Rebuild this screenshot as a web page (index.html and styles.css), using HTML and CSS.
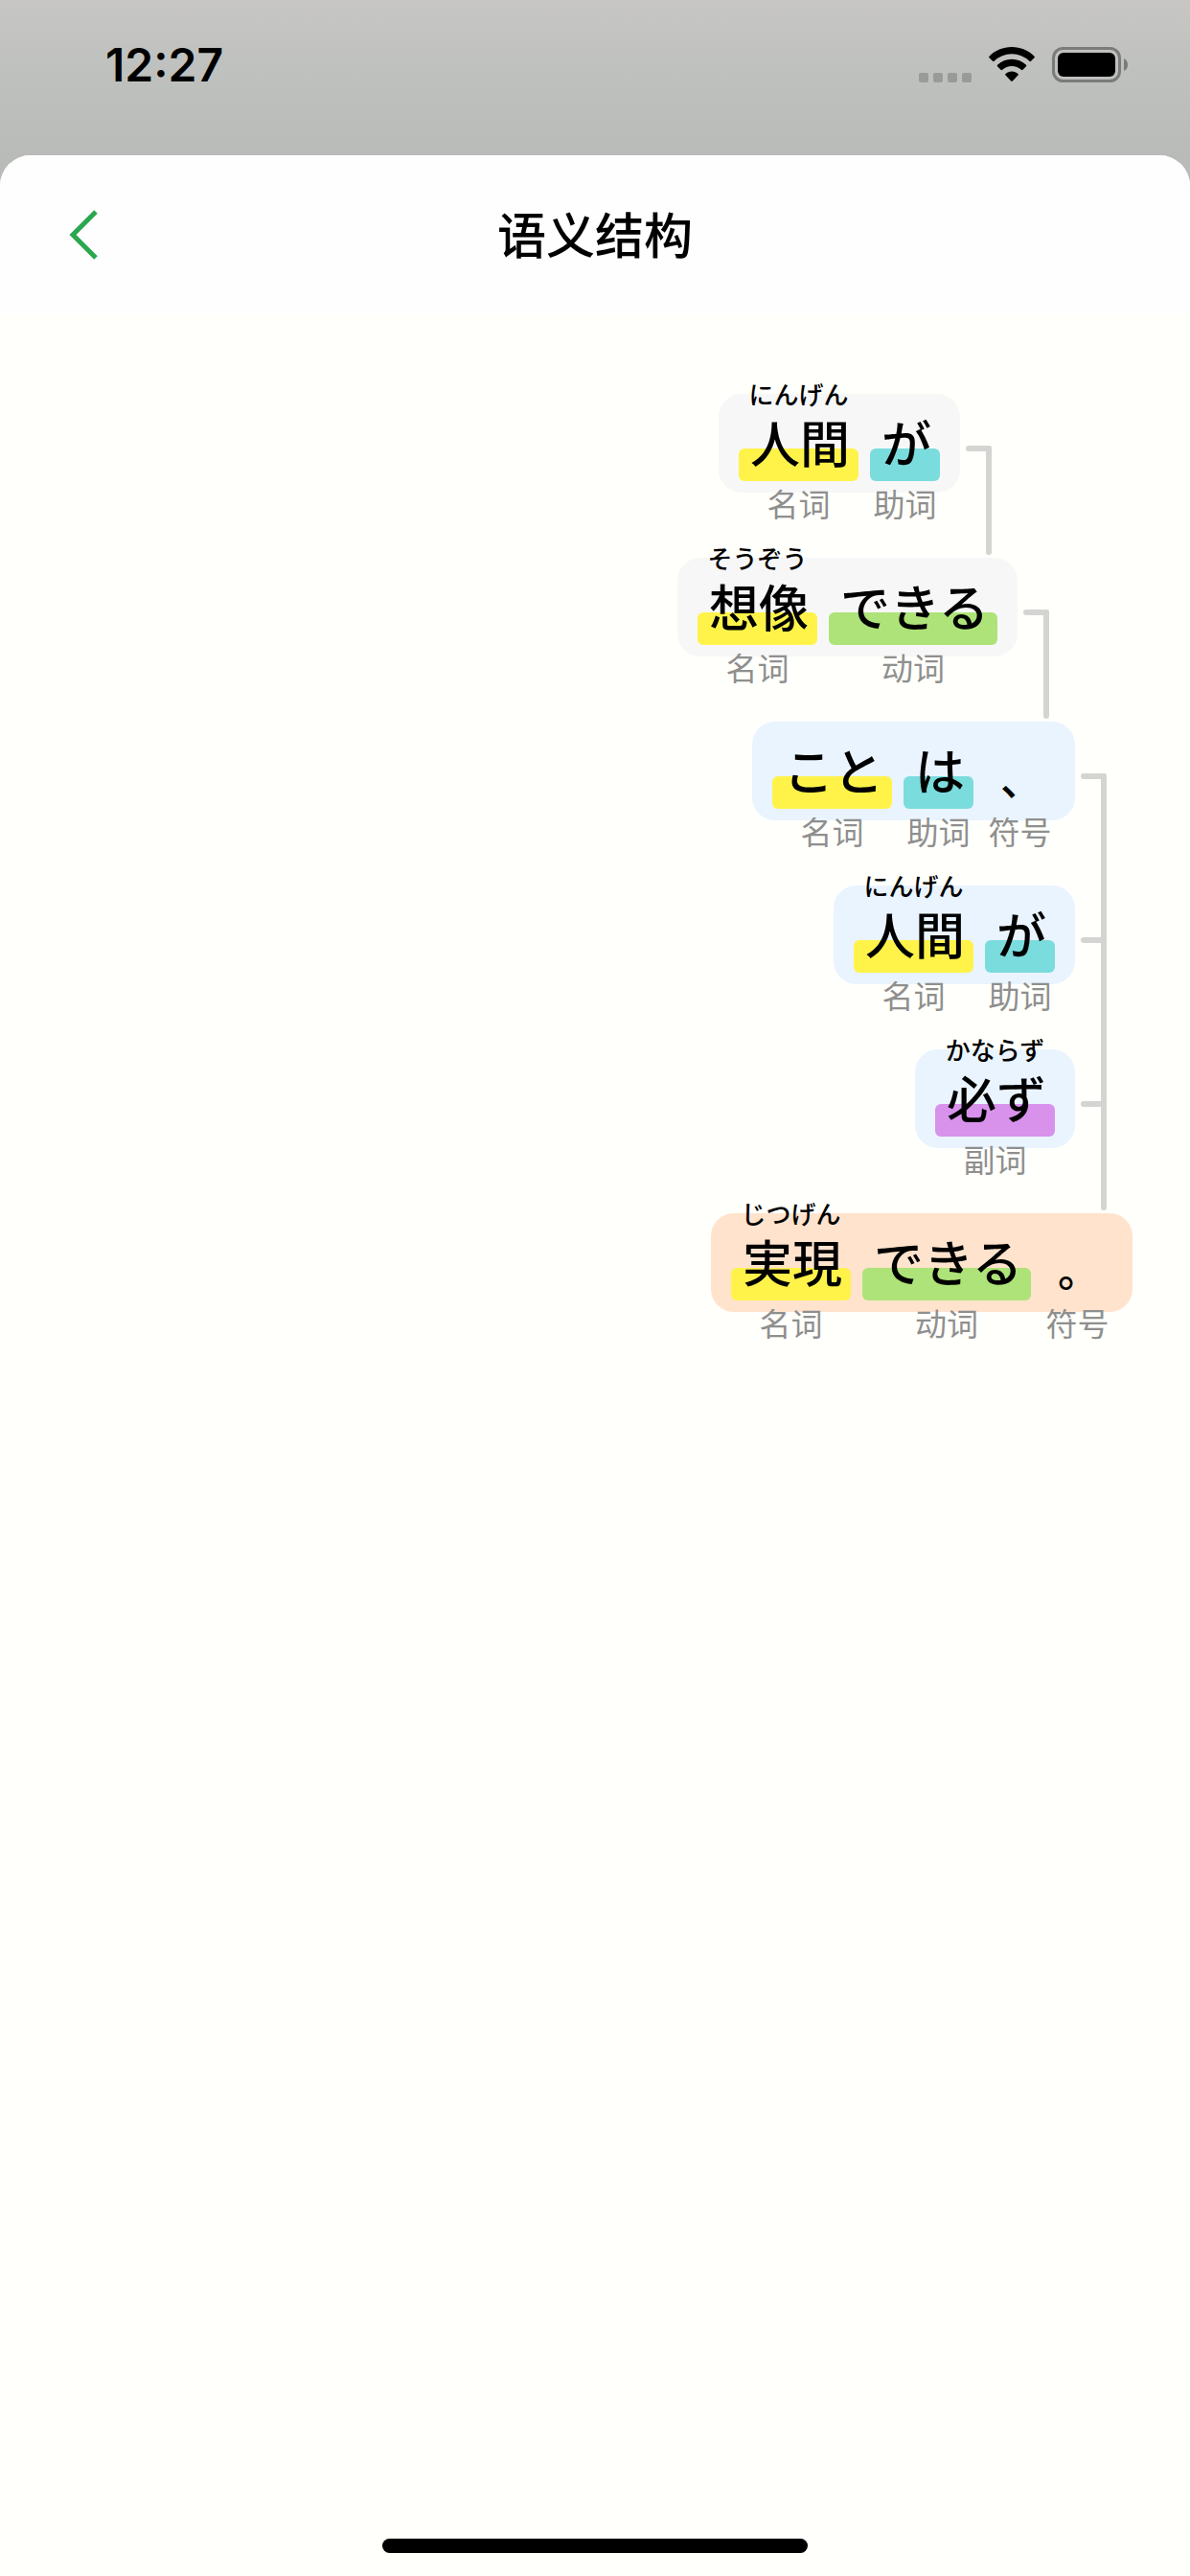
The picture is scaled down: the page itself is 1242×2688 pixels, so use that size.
FILE: index.html
```html
<!DOCTYPE html>
<html lang="zh-CN">
<head>
<meta charset="utf-8">
<meta name="viewport" content="width=device-width, initial-scale=1">
<title>语义结构</title>
<link rel="stylesheet" href="styles.css">
</head>
<body>
<div class="status">
  <time class="status__time">12:27</time>
  <div class="status__icons">
    <svg class="status__cell" width="55" height="10" viewBox="0 0 55 10" aria-hidden="true">
      <rect width="10" height="10" rx="2"/><rect x="15" width="10" height="10" rx="2"/><rect x="30" width="10" height="10" rx="2"/><rect x="45" width="10" height="10" rx="2"/>
    </svg>
    <svg width="48" height="37" viewBox="0 0 48 37" aria-hidden="true">
      <path d="M24 0C33 0 41.500 3.600 47.500 9.700Q48.300 10.500 47.500 11.300L44 14.800Q43.200 15.500 42.400 14.800A26.500 26.500 0 0 0 5.600 14.800Q4.800 15.500 4 14.800L.500 11.300Q-.300 10.500 .500 9.700C6.500 3.600 15 0 24 0Z"/>
      <path d="M24 12.700C29.700 12.700 35 14.900 39 18.700Q39.700 19.500 39 20.300L35.500 23.800Q34.700 24.500 33.900 23.800A14.600 14.600 0 0 0 14.100 23.800Q13.300 24.500 12.500 23.800L9 20.300Q8.300 19.500 9 18.700C13 14.900 18.300 12.700 24 12.700Z"/>
      <path d="M24 25.500C26.500 25.500 28.800 26.400 30.500 27.900Q31.200 28.600 30.500 29.400L24.800 35.500Q24 36.300 23.200 35.500L17.500 29.400Q16.800 28.600 17.500 27.900C19.200 26.400 21.500 25.500 24 25.500Z"/>
    </svg>
    <svg width="80" height="37" viewBox="0 0 80 37" aria-hidden="true">
      <rect x="1.500" y="1.500" width="69" height="34" rx="10" fill="none" stroke="#7a7c7a" stroke-width="3"/>
      <rect x="6" y="6" width="60" height="25" rx="6"/>
      <path d="M75 12Q79 14 79 18.500T75 25Z" fill="#7a7c7a"/>
    </svg>
  </div>
</div>
<main class="sheet">
  <header class="bar">
    <button class="bar__back" type="button" aria-label="返回">
      <svg width="30" height="54" viewBox="0 0 30 54" aria-hidden="true"><path d="M28 3L4 27L28 51" fill="none" stroke="#2aa84f" stroke-width="5"/></svg>
    </button>
    <h1 class="bar__title">语义结构</h1>
  </header>
  <ol class="tree">
    <li class="row row--level3">
      <div class="clause">
        <div class="token token--noun"><span class="token__kana">にんげん</span><span class="token__word" lang="ja">人間</span><span class="token__pos">名词</span></div>
        <div class="token token--particle"><span class="token__kana"></span><span class="token__word" lang="ja">が</span><span class="token__pos">助词</span></div>
      </div>
      <div class="link"></div>
    </li>
    <li class="row row--level2">
      <div class="clause">
        <div class="token token--noun"><span class="token__kana">そうぞう</span><span class="token__word" lang="ja">想像</span><span class="token__pos">名词</span></div>
        <div class="token token--verb"><span class="token__kana"></span><span class="token__word" lang="ja">できる</span><span class="token__pos">动词</span></div>
      </div>
      <div class="link"></div>
    </li>
    <li class="row row--level1">
      <div class="clause clause--child">
        <div class="token token--noun"><span class="token__kana"></span><span class="token__word" lang="ja">こと</span><span class="token__pos">名词</span></div>
        <div class="token token--particle"><span class="token__kana"></span><span class="token__word" lang="ja">は</span><span class="token__pos">助词</span></div>
        <div class="token token--symbol"><span class="token__kana"></span><span class="token__word" lang="ja">、</span><span class="token__pos">符号</span></div>
      </div>
      <div class="link link--through"></div>
    </li>
    <li class="row row--level1">
      <div class="clause clause--child">
        <div class="token token--noun"><span class="token__kana">にんげん</span><span class="token__word" lang="ja">人間</span><span class="token__pos">名词</span></div>
        <div class="token token--particle"><span class="token__kana"></span><span class="token__word" lang="ja">が</span><span class="token__pos">助词</span></div>
      </div>
      <div class="link link--through"></div>
    </li>
    <li class="row row--level1">
      <div class="clause clause--child">
        <div class="token token--adverb"><span class="token__kana">かならず</span><span class="token__word" lang="ja">必ず</span><span class="token__pos">副词</span></div>
      </div>
      <div class="link"></div>
    </li>
    <li class="row row--root">
      <div class="clause clause--root">
        <div class="token token--noun"><span class="token__kana">じつげん</span><span class="token__word" lang="ja">実現</span><span class="token__pos">名词</span></div>
        <div class="token token--verb"><span class="token__kana"></span><span class="token__word" lang="ja">できる</span><span class="token__pos">动词</span></div>
        <div class="token token--symbol"><span class="token__kana"></span><span class="token__word" lang="ja">。</span><span class="token__pos">符号</span></div>
      </div>
    </li>
  </ol>
  <div class="home"></div>
</main>
</body>
</html>
```
FILE: styles.css
```css
* { box-sizing: border-box; }

body {
  margin: 0;
  min-height: 100vh;
  display: flex;
  flex-direction: column;
  background: #b9bbb8 linear-gradient(#c7c6c4, #bfc1be 70px, #b9bbb8 162px) no-repeat;
  color: #000;
  font-family: "Noto Sans CJK SC", sans-serif;
}

/* Status bar */
.status {
  display: flex;
  justify-content: space-between;
  height: 162px;
  padding: 38px 64px 0 110px;
}
.status__time {
  font: 600 48px/60px Inter, sans-serif;
}
.status__icons {
  display: flex;
  align-items: flex-end;
  gap: 18px;
  height: 48px;
}
.status__cell { fill: #999b98; }

/* Sheet */
.sheet {
  flex: 1;
  display: flex;
  flex-direction: column;
  border-radius: 32px 32px 0 0;
  overflow: hidden;
  background: #fffffb;
}
.bar {
  display: grid;
  grid-template-columns: 130px 1fr 130px;
  align-items: center;
  height: 166px;
  background: #fefefe;
}
.bar__back {
  justify-self: end;
  display: flex;
  padding: 0 28px;
  border: 0;
  background: none;
  cursor: pointer;
}
.bar__title {
  margin: 0;
  padding-bottom: 4px;
  text-align: center;
  font-size: 51px;
  line-height: 72px;
  font-weight: 500;
}

/* Dependency tree */
.tree {
  flex: 1;
  margin: 0;
  padding: 83px 0 0;
  list-style: none;
}
.row {
  display: flex;
  justify-content: flex-end;
  padding-bottom: 68px;
}
.row--root { padding-right: 60px; }
.row--level1 { padding-right: 87px; }
.row--level2 { padding-right: 147px; }
.row--level3 { padding-right: 207px; }

.clause {
  display: flex;
  gap: 12px;
  padding: 0 21px;
  border-radius: 24px;
  background: #f7f7f8;
}
.clause--child { background: #e9f4ff; }
.clause--root { background: #ffe3cd; }

/* Reading and part of speech hang over the edges of the clause */
.token {
  display: flex;
  flex-direction: column;
  align-items: center;
  margin: -17px 0 -28px;
}
.token__kana {
  height: 34px;
  font: 500 26px/34px "Noto Sans CJK JP", sans-serif;
}
.token__word {
  position: relative;
  z-index: 0;
  padding: 0 9px 8px 12px;
  font: 500 52px/66px "Noto Sans CJK JP", sans-serif;
}
.token__word::before {
  content: "";
  position: absolute;
  inset: auto 0 0;
  z-index: -1;
  height: 34px;
  border-radius: 6px;
  background: var(--mark, transparent);
}
.token__pos {
  margin-top: 6px;
  color: #8f8f8f;
  font-size: 33px;
  line-height: 34px;
  font-weight: 400;
}
.token--noun { --mark: #fff34a; }
.token--particle { --mark: #7bdcdd; }
.token--verb { --mark: #aee379; }
.token--adverb { --mark: #d892ec; }
.token--symbol .token__word {
  padding: 8px 13px 0 16px;
  font-size: 44px;
}

/* Connector: a stub beside the clause and a line down to its head */
.link {
  display: flex;
  margin: 54px 0 -65px 6px;
}
.link::before,
.link::after {
  content: "";
  border-radius: 3px;
  background: #d4d4d2;
}
.link::before {
  width: 27px;
  height: 6px;
}
.link::after {
  width: 6px;
  margin-left: -6px;
}
.link--through { margin-bottom: -125px; }

.home {
  align-self: center;
  width: 444px;
  height: 15px;
  margin-bottom: 24px;
  border-radius: 8px;
  background: #000;
}
```
